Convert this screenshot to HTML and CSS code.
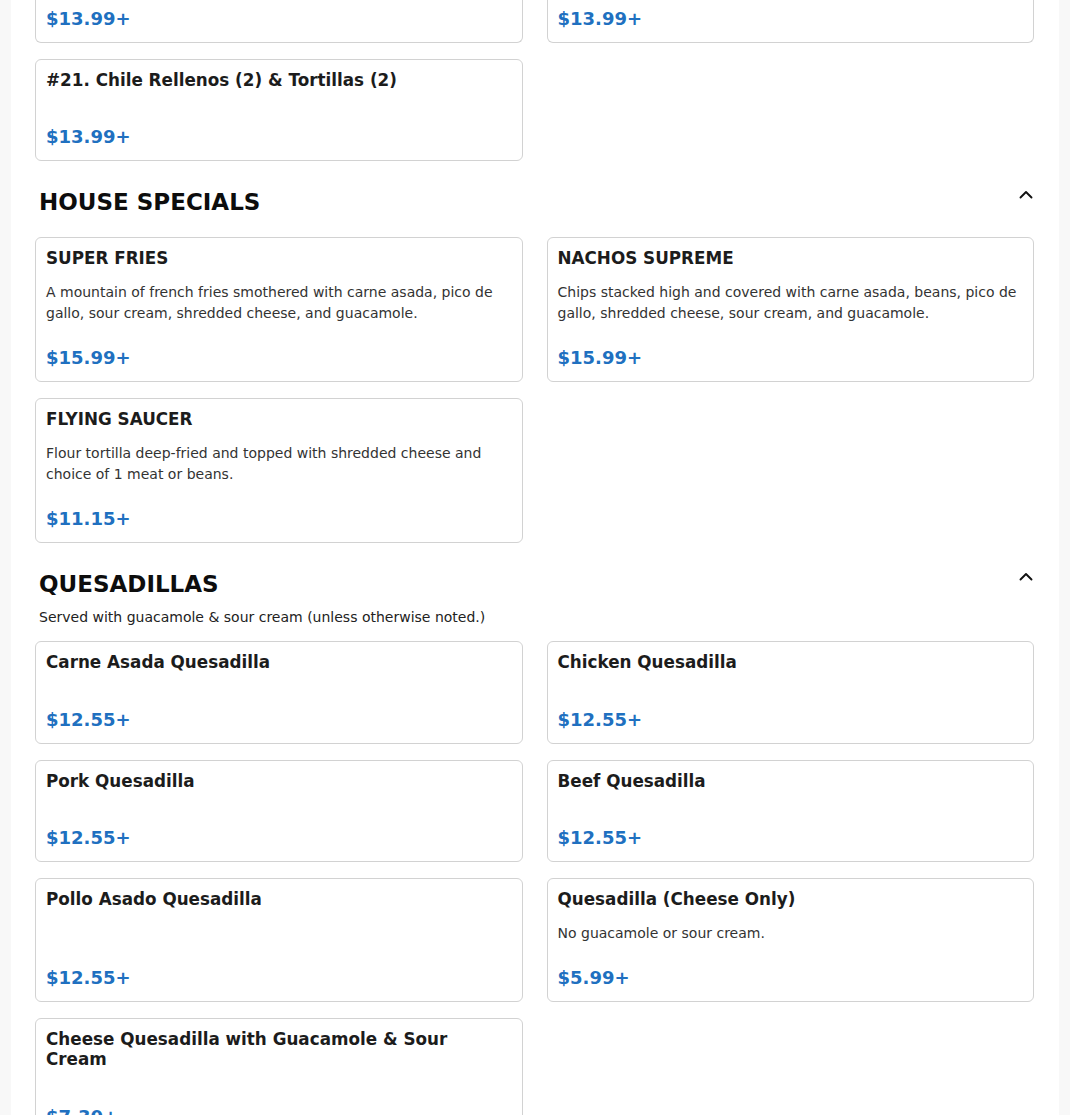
FILE: index.html
```html
<!DOCTYPE html>
<html lang="en">
<head>
<meta charset="utf-8">
<title>Menu</title>
<link rel="stylesheet" href="styles.css">
</head>
<body>
<main class="panel">
  <section class="section section--continued">
    <div class="grid">
      <article class="card card--clipped">
        <div class="card-price">$13.99+</div>
      </article>
      <article class="card card--clipped">
        <div class="card-price">$13.99+</div>
      </article>
      <article class="card">
        <div class="card-body">
          <h3 class="card-title">#21. Chile Rellenos (2) &amp; Tortillas (2)</h3>
        </div>
        <div class="card-price">$13.99+</div>
      </article>
    </div>
  </section>

  <section class="section">
    <header class="section-head">
      <div class="section-row">
        <h2 class="section-title">HOUSE SPECIALS</h2>
        <button class="collapse" type="button" aria-label="Collapse">
          <svg viewBox="0 0 16 16" width="16" height="16"><path d="M2.5 9.5 L8 4 L13.5 9.5" fill="none" stroke="#111" stroke-width="1.9" stroke-linecap="round" stroke-linejoin="round"/></svg>
        </button>
      </div>
    </header>
    <div class="grid">
      <article class="card">
        <div class="card-body">
          <h3 class="card-title">SUPER FRIES</h3>
          <p class="card-desc">A mountain of french fries smothered with carne asada, pico de gallo, sour cream, shredded cheese, and guacamole.</p>
        </div>
        <div class="card-price">$15.99+</div>
      </article>
      <article class="card">
        <div class="card-body">
          <h3 class="card-title">NACHOS SUPREME</h3>
          <p class="card-desc">Chips stacked high and covered with carne asada, beans, pico de gallo, shredded cheese, sour cream, and guacamole.</p>
        </div>
        <div class="card-price">$15.99+</div>
      </article>
      <article class="card">
        <div class="card-body">
          <h3 class="card-title">FLYING SAUCER</h3>
          <p class="card-desc">Flour tortilla deep-fried and topped with shredded cheese and choice of 1 meat or beans.</p>
        </div>
        <div class="card-price">$11.15+</div>
      </article>
    </div>
  </section>

  <section class="section">
    <header class="section-head">
      <div class="section-row">
        <h2 class="section-title">QUESADILLAS</h2>
        <button class="collapse" type="button" aria-label="Collapse">
          <svg viewBox="0 0 16 16" width="16" height="16"><path d="M2.5 9.5 L8 4 L13.5 9.5" fill="none" stroke="#111" stroke-width="1.9" stroke-linecap="round" stroke-linejoin="round"/></svg>
        </button>
      </div>
      <p class="section-sub">Served with guacamole &amp; sour cream (unless otherwise noted.)</p>
    </header>
    <div class="grid">
      <article class="card">
        <div class="card-body">
          <h3 class="card-title">Carne Asada Quesadilla</h3>
        </div>
        <div class="card-price">$12.55+</div>
      </article>
      <article class="card">
        <div class="card-body">
          <h3 class="card-title">Chicken Quesadilla</h3>
        </div>
        <div class="card-price">$12.55+</div>
      </article>
      <article class="card">
        <div class="card-body">
          <h3 class="card-title">Pork Quesadilla</h3>
        </div>
        <div class="card-price">$12.55+</div>
      </article>
      <article class="card">
        <div class="card-body">
          <h3 class="card-title">Beef Quesadilla</h3>
        </div>
        <div class="card-price">$12.55+</div>
      </article>
      <article class="card">
        <div class="card-body">
          <h3 class="card-title">Pollo Asado Quesadilla</h3>
        </div>
        <div class="card-price">$12.55+</div>
      </article>
      <article class="card">
        <div class="card-body">
          <h3 class="card-title">Quesadilla (Cheese Only)</h3>
          <p class="card-desc">No guacamole or sour cream.</p>
        </div>
        <div class="card-price">$5.99+</div>
      </article>
      <article class="card">
        <div class="card-body">
          <h3 class="card-title">Cheese Quesadilla with Guacamole &amp; Sour Cream</h3>
        </div>
        <div class="card-price">$7.30+</div>
      </article>
    </div>
  </section>
</main>
</body>
</html>
```

FILE: styles.css
```css
* {
  box-sizing: border-box;
}

html,
body {
  margin: 0;
  padding: 0;
}

body {
  background: #f8f8f8;
  font-family: "DejaVu Sans", "Liberation Sans", sans-serif;
  color: #1a1a1a;
  overflow: hidden;
}

.panel {
  margin: 0 11px;
  padding: 0 25px 40px 24px;
  background: #ffffff;
  min-height: 1115px;
}

.section + .section {
  margin-top: 27px;
}

.section-head {
  padding-bottom: 13px;
}

.section-row {
  display: flex;
  justify-content: space-between;
  align-items: flex-start;
  height: 28px;
  margin-bottom: 8px;
  padding: 0 0 0 4px;
}

.section-title {
  margin: 0;
  font-size: 23px;
  line-height: 28px;
  font-weight: 700;
  color: #0d0d0d;
}

.collapse {
  display: block;
  width: 16px;
  height: 16px;
  padding: 0;
  margin: 0;
  border: 0;
  background: none;
}

.collapse svg {
  display: block;
}

.section-sub {
  margin: 0;
  padding-left: 4px;
  font-size: 14px;
  line-height: 22px;
  color: #222;
}

.grid {
  display: grid;
  grid-template-columns: 1fr 1fr;
  column-gap: 24px;
  row-gap: 16px;
}

.card {
  display: flex;
  flex-direction: column;
  border: 1px solid #d2d2d2;
  border-radius: 6px;
  padding: 10px;
  background: #fff;
}

.card--clipped {
  border-top: 0;
  border-radius: 0 0 6px 6px;
  padding-top: 4.5px;
}

.card-body {
  flex: 1;
}

.card-title {
  margin: 0 0 13.5px;
  font-size: 16.8px;
  line-height: 20px;
  font-weight: 700;
  color: #1c1c1c;
}

.card-desc {
  margin: 0;
  padding-top: 0.5px;
  font-size: 14px;
  line-height: 21px;
  color: #333;
}

.card-price {
  margin-top: 20px;
  font-size: 18px;
  line-height: 27px;
  font-weight: 700;
  color: #2070c0;
}

.card--clipped .card-price {
  margin-top: 0;
}
```
